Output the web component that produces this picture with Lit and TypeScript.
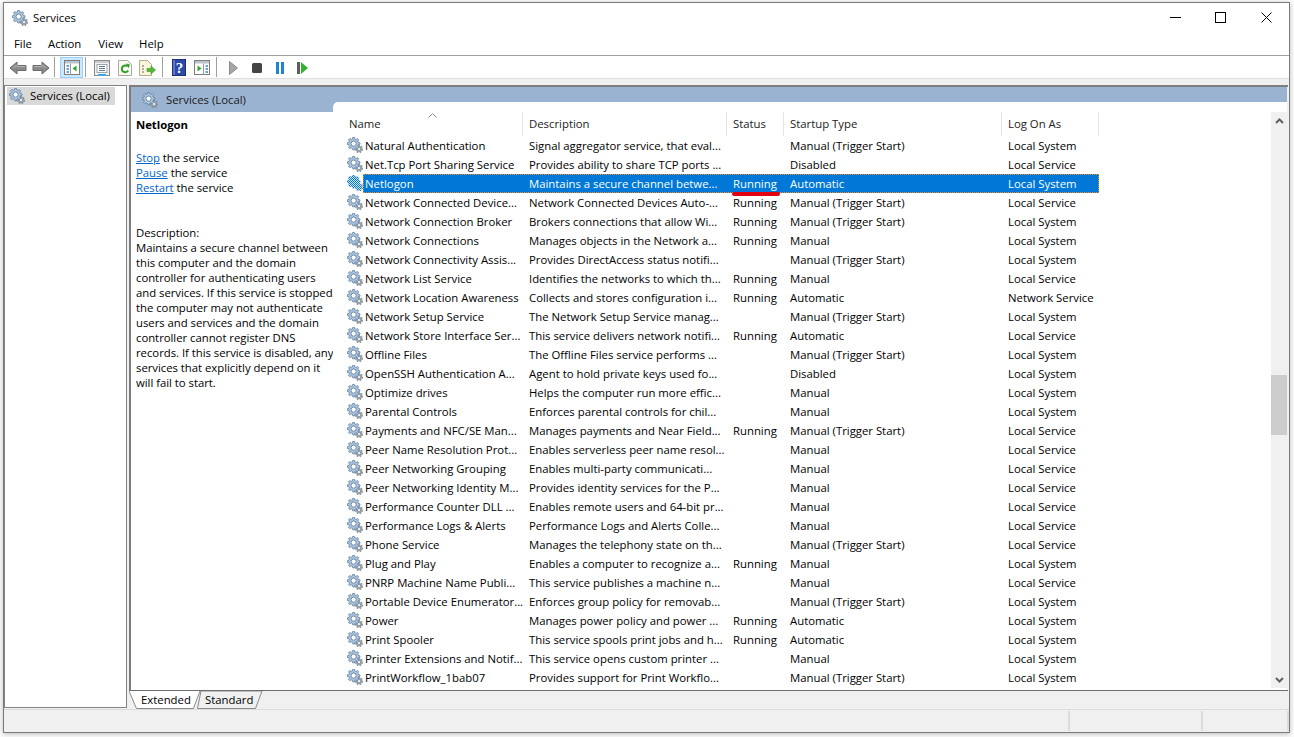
import { LitElement, html, svg, css } from "lit";
import { customElement } from "lit/decorators.js";

type Row = [string, string, string, string, string];
const L = "Local System", S = "Local Service", N = "Network Service";
const MT = "Manual (Trigger Start)", M = "Manual", A = "Automatic", D = "Disabled", R = "Running";
const rows: Row[] = [
  ["Natural Authentication", "Signal aggregator service, that eval...", "", MT, L],
  ["Net.Tcp Port Sharing Service", "Provides ability to share TCP ports ...", "", D, S],
  ["Netlogon", "Maintains a secure channel betwe...", R, A, L],
  ["Network Connected Device...", "Network Connected Devices Auto-...", R, MT, S],
  ["Network Connection Broker", "Brokers connections that allow Wi...", R, MT, L],
  ["Network Connections", "Manages objects in the Network a...", R, M, L],
  ["Network Connectivity Assis...", "Provides DirectAccess status notifi...", "", MT, L],
  ["Network List Service", "Identifies the networks to which th...", R, M, S],
  ["Network Location Awareness", "Collects and stores configuration i...", R, A, N],
  ["Network Setup Service", "The Network Setup Service manag...", "", MT, L],
  ["Network Store Interface Ser...", "This service delivers network notifi...", R, A, S],
  ["Offline Files", "The Offline Files service performs ...", "", MT, L],
  ["OpenSSH Authentication A...", "Agent to hold private keys used fo...", "", D, L],
  ["Optimize drives", "Helps the computer run more effic...", "", M, L],
  ["Parental Controls", "Enforces parental controls for chil...", "", M, L],
  ["Payments and NFC/SE Man...", "Manages payments and Near Field...", R, MT, S],
  ["Peer Name Resolution Prot...", "Enables serverless peer name resol...", "", M, S],
  ["Peer Networking Grouping", "Enables multi-party communicati...", "", M, S],
  ["Peer Networking Identity M...", "Provides identity services for the P...", "", M, S],
  ["Performance Counter DLL ...", "Enables remote users and 64-bit pr...", "", M, S],
  ["Performance Logs & Alerts", "Performance Logs and Alerts Colle...", "", M, S],
  ["Phone Service", "Manages the telephony state on th...", "", MT, S],
  ["Plug and Play", "Enables a computer to recognize a...", R, M, L],
  ["PNRP Machine Name Publi...", "This service publishes a machine n...", "", M, S],
  ["Portable Device Enumerator...", "Enforces group policy for removab...", "", MT, L],
  ["Power", "Manages power policy and power ...", R, A, L],
  ["Print Spooler", "This service spools print jobs and h...", R, A, L],
  ["Printer Extensions and Notif...", "This service opens custom printer ...", "", M, L],
  ["PrintWorkflow_1bab07", "Provides support for Print Workflo...", "", MT, L],
];
const descLines = [
  "Maintains a secure channel between",
  "this computer and the domain",
  "controller for authenticating users",
  "and services. If this service is stopped,",
  "the computer may not authenticate",
  "users and services and the domain",
  "controller cannot register DNS",
  "records. If this service is disabled, any",
  "services that explicitly depend on it",
  "will fail to start.",
];

function gearPath(cx: number, cy: number, ro: number, ri: number, n: number): string {
  const pts: string[] = [];
  const step = (Math.PI * 2) / n;
  for (let i = 0; i < n; i++) {
    const a = i * step - Math.PI / 2;
    const w = step * 0.2;
    const list: [number, number][] = [
      [ri, a - w * 1.5],
      [ro, a - w * 0.8],
      [ro, a + w * 0.8],
      [ri, a + w * 1.5],
    ];
    for (const [r, t] of list) {
      pts.push(`${(cx + r * Math.cos(t)).toFixed(2)} ${(cy + r * Math.sin(t)).toFixed(2)}`);
    }
  }
  return "M" + pts.join("L") + "Z";
}
const BIG = gearPath(6.6, 6.6, 6.4, 4.9, 8);
const SMALL = gearPath(12, 12, 3.9, 2.9, 7);

function gear(selected = false) {
  return html`<svg class="gear" viewBox="0 0 16 16" width="16" height="16">
    ${selected
      ? svg`<defs><pattern id="dither" width="2" height="2" patternUnits="userSpaceOnUse"><rect width="2" height="2" fill="#cfe4f7"></rect><rect width="1" height="1" fill="#0078d7"></rect><rect x="1" y="1" width="1" height="1" fill="#0078d7"></rect></pattern></defs>`
      : ""}
    <path d=${SMALL} fill="#96a0aa" stroke="#747b83" stroke-width=".5"></path>
    <circle cx="12" cy="12" r="1.1" fill="#fff"></circle>
    <path d=${BIG} fill="#adc4dc" stroke="#5f80a2" stroke-width=".8"></path>
    <circle cx="6.6" cy="6.6" r="2.6" fill="#fff" stroke="#5f80a2" stroke-width=".9"></circle>
    ${selected
      ? svg`<path d=${SMALL} fill="url(#dither)" stroke="url(#dither)" stroke-width=".5"></path><path d=${BIG} fill="url(#dither)" stroke="url(#dither)" stroke-width=".8"></path>`
      : ""}
  </svg>`;
}

const icons = {
  back: html`<svg viewBox="0 0 18 16" width="18" height="16"><path d="M1 8 8 2v3.5h9v5H8V14Z" fill="#8b8b8b" stroke="#6a6a6a"></path><path d="M4 8 8 5v1.5h8" fill="none" stroke="#b5b5b5"></path></svg>`,
  fwd: html`<svg viewBox="0 0 18 16" width="18" height="16"><path d="M17 8 10 2v3.5H1v5h9V14Z" fill="#8b8b8b" stroke="#6a6a6a"></path><path d="M14 8 10 5v1.5H2" fill="none" stroke="#b5b5b5"></path></svg>`,
  tree: html`<svg viewBox="0 0 16 15" width="16" height="15"><rect x=".5" y=".5" width="15" height="14" fill="#fff" stroke="#7d7d7d"></rect><rect x="1" y="1" width="14" height="2.5" fill="#b9c4cf"></rect><path d="M6.5 3.5V14.5" stroke="#9a9a9a"></path><path d="M2.5 6h2.5M2.5 9h2.5M2.5 12h2.5" stroke="#3a83c9" stroke-width="1.4"></path><path d="M12.5 5.5v6L8.5 8.500Z" fill="#2ea52e"></path></svg>`,
  props: html`<svg viewBox="0 0 16 16" width="16" height="16"><rect x=".5" y=".5" width="15" height="15" fill="#f2f2f2" stroke="#8a8a8a"></rect><rect x="1" y="1" width="14" height="2" fill="#c7cdd3"></rect><rect x="3" y="4.500" width="10" height="8" fill="#fff" stroke="#9aa5b0"></rect><path d="M5 6.500h6M5 8.500h6M5 10.500h6" stroke="#6c7a88"></path><rect x="4" y="14" width="8" height="2" fill="#3fa6e0"></rect></svg>`,
  refresh: html`<svg viewBox="0 0 14 16" width="14" height="16"><path d="M.5.5h9l4 4v11H.5Z" fill="#fbfbf2" stroke="#a9a9a0"></path><path d="M10.200 10.500A3.400 3.400 0 1 1 9.400 6.200" fill="none" stroke="#2f9e2f" stroke-width="2"></path><path d="M8 3.500l4 1-1.500 3.800Z" fill="#2f9e2f"></path></svg>`,
  exportList: html`<svg viewBox="0 0 17 16" width="17" height="16"><path d="M.5.5h8l4 4v11H.5Z" fill="#f9f5dc" stroke="#b4ad8c"></path><path d="M3 6h2M3 9h2M3 12h2" stroke="#666"></path><path d="M8 8.500h4V6l4.500 4-4.500 4v-2.500H8Z" fill="#55b636" stroke="#3e9426" stroke-width=".6"></path></svg>`,
  help: html`<svg viewBox="0 0 14 17" width="14" height="17"><rect x=".5" y=".5" width="13" height="16" fill="#2c4aa6" stroke="#1e2f78"></rect><rect x="1" y="1" width="2" height="15" fill="#5d78c9"></rect><text class="q" x="7.500" y="13.500">?</text></svg>`,
  action: html`<svg viewBox="0 0 16 15" width="16" height="15"><rect x=".5" y=".5" width="15" height="14" fill="#fff" stroke="#7d7d7d"></rect><rect x="1" y="1" width="14" height="2.500" fill="#b9c4cf"></rect><path d="M9.500 3.500V14.500" stroke="#9a9a9a"></path><path d="M11.500 6h2.500M11.500 9h2.500M11.500 12h2.500" stroke="#3a83c9" stroke-width="1.400"></path><path d="M3.500 5.500v6L7.500 8.500Z" fill="#2ea52e"></path></svg>`,
  play: html`<svg viewBox="0 0 9 14" width="9" height="14"><path d="M.5.500 8.500 7 .5 13.500Z" fill="#a6a6a6" stroke="#8c8c8c"></path></svg>`,
  stop: html`<svg viewBox="0 0 10 10" width="10" height="10"><rect width="10" height="10" rx="1.500" fill="#444"></rect></svg>`,
  pause: html`<svg viewBox="0 0 8 12" width="8" height="12"><rect width="3" height="12" fill="#1f82d2"></rect><rect x="5" width="3" height="12" fill="#1f82d2"></rect></svg>`,
  resume: html`<svg viewBox="0 0 11 12" width="11" height="12"><rect width="3" height="12" fill="#5d5d5d"></rect><path d="M4 0 11 6 4 12Z" fill="#35b035"></path></svg>`,
};

@customElement("app-root")
export class AppRoot extends LitElement {
  static styles = css`
    :host {
      display: block;
      width: 1294px;
      height: 737px;
      box-sizing: border-box;
      padding: 2px 4px 4px 3px;
      background: #fbfbfb;
      font-family: "Open Sans", "Noto Sans", sans-serif;
      font-size: 11.35px;
      color: #000;
    }
    .win {
      height: 100%;
      box-sizing: border-box;
      border: 1px solid #7a7a7a;
      background: #f0f0f0;
      display: flex;
      flex-direction: column;
      box-shadow: 0 1px 5px rgba(0, 0, 0, 0.25);
    }
    .title {
      height: 31px;
      flex: none;
      box-sizing: border-box;
      background: #fff;
      display: flex;
      align-items: center;
      padding: 0 0 2px 8px;
    }
    .title .gear { margin-right: 5px; }
    .ctl { margin-left: auto; display: flex; }
    .ctl div { width: 45.500px; height: 29px; display: flex; align-items: center; justify-content: center; }
    .menu {
      height: 21px;
      flex: none;
      box-sizing: content-box;
      background: #fff;
      border-bottom: 1px solid #a0a0a0;
      display: flex;
      align-items: center;
      padding-left: 3px;
    }
    .menu span { padding: 0 7px 2px 7px; margin-right: 2px; }
    .menu span:nth-child(2) { margin-right: 3px; }
    .tool {
      height: 22px;
      flex: none;
      box-sizing: content-box;
      background: #fff;
      border-bottom: 1px solid #e0e0e0;
      display: flex;
      align-items: center;
      padding-left: 2px;
    }
    .b { width: 23px; height: 21px; box-sizing: border-box; display: flex; align-items: center; justify-content: center; flex: none; padding-top: 1px; }
    .b.on { background: #cce8ff; border: 1px solid #99d1ff; padding-top: 0; }
    .sep { width: 1px; height: 20px; background: #a0a0a0; flex: none; margin: 0 4px 0 2px; }
    .sep.s1 { margin: 0 5px 0 2px; }
    .sep.s2 { margin: 0 4px 0 3px; }
    .sep.s3 { margin: 0 5px 0 3px; }
    .q { font: bold 15px "Liberation Serif", serif; fill: #fff; text-anchor: middle; }
    .content {
      flex: 1;
      min-height: 0;
      display: flex;
      margin-top: 6px;
    }
    .tree {
      width: 123px;
      box-sizing: border-box;
      flex: none;
      background: #fff;
      border: 1px solid #828282;
      padding: 1px 0 0 2px;
      margin-bottom: 1px;
    }
    .node {
      width: 108px;
      height: 18px;
      background: #d9d9d9;
      display: flex;
      align-items: center;
      padding: 0 0 1px 2px;
      box-sizing: border-box;
    }
    .node .gear { margin-right: 5px; flex: none; }
    .right {
      flex: 1;
      min-width: 0;
      margin: 0 1px 0 2px;
      display: flex;
      flex-direction: column;
    }
    .frame {
      height: 605px;
      box-sizing: border-box;
      flex: none;
      display: flex;
      border-top: 2px solid #7d7d7d;
      border-left: 2px solid #7d7d7d;
      padding-right: 1px;
    }
    .info { width: 202px; flex: none; background: #fff; }
    .head {
      height: 25px;
      box-sizing: border-box;
      background: #9ab3d1;
      display: flex;
      align-items: center;
      padding: 0 0 0 11px;
      color: #1a1a1a;
    }
    .head .gear { margin-right: 8px; }
    .body { padding: 5px 0 0 5px; line-height: 15px; white-space: nowrap; letter-spacing: -0.03px; }
    .body b { display: block; font-weight: 700; }
    .acts { margin-top: 18px; }
    .acts a { color: #0066cc; text-decoration: underline; }
    .dsc { margin-top: 30px; }
    .main { flex: 1; min-width: 0; background: #9ab3d1; display: flex; }
    .sheet {
      flex: 1;
      min-width: 0;
      margin-top: 15px;
      background: #fff;
      border-top-left-radius: 5px;
      padding-top: 10px;
      display: flex;
    }
    .list { flex: 1; min-width: 0; padding-left: 11px; position: relative; }
    .hdr {
      display: grid;
      grid-template-columns: 179px 204px 57px 218px 97px;
      height: 24px;
      width: 755px;
      position: relative;
    }
    .hdr span {
      border-right: 1px solid #e5e5e5;
      padding-left: 6px;
      line-height: 24px;
      color: #222;
    }
    .hdr span:first-of-type { padding-left: 5px; }
    .sort { position: absolute; left: 84px; top: 1px; }
    .row { display: flex; height: 19px; }
    .ico { width: 19px; flex: none; box-sizing: border-box; padding: 1px 0 0 3px; }
    .cells {
      width: 736px;
      box-sizing: border-box;
      border: 1px dotted transparent;
      display: grid;
      grid-template-columns: 159px 204px 57px 218px 96px;
      line-height: 17px;
    }
    .cells span { padding-left: 6px; white-space: nowrap; overflow: hidden; }
    .cells span:first-child { padding-left: 1px; }
    .cells span.st { position: relative; overflow: visible; }
    .row.sel .cells { background: #0078d7; color: #fff; border-color: #f08c28; }
    .mark {
      position: absolute;
      left: 5px;
      top: 17px;
      width: 48px;
      height: 4px;
      border-radius: 2px;
      background: #e3000f;
    }
    .bar {
      width: 16px;
      flex: none;
      margin-bottom: 2px;
      background: #f0f0f0;
      display: flex;
      flex-direction: column;
      align-items: center;
      justify-content: space-between;
      position: relative;
    }
    .arr { height: 17px; display: flex; align-items: center; }
    .thumb { position: absolute; left: 0; right: 0; top: 263px; height: 60px; background: #cdcdcd; }
    .tabs {
      flex: 1;
      display: grid;
      border-top: 1px solid #6e6e6e;
      margin-left: 0;
    }
    .tabs > * { grid-area: 1 / 1; }
    .tabtext { display: flex; padding: 0 0 0 12px; line-height: 18px; }
    .tabtext span:first-child { width: 64px; }
    .status {
      height: 23px;
      box-sizing: border-box;
      flex: none;
      border-top: 1px solid #dcdcdc;
      display: flex;
      justify-content: flex-end;
    }
    .status div { border-left: 2px solid #dcdcdc; margin-top: 1px; margin-bottom: 1px; box-sizing: border-box; }
    .status .a { width: 133px; }
    .status .c { width: 86px; }
    .status .d { width: 2px; }
  `;

  render() {
    return html`<div class="win">
      <div class="title">
        ${gear()}<span>Services</span>
        <div class="ctl">
          <div><svg width="11" height="11" viewBox="0 0 11 11"><path d="M0 5.500H11" stroke="#000"></path></svg></div>
          <div><svg width="11" height="11" viewBox="0 0 11 11"><rect x=".5" y=".5" width="10" height="10" fill="none" stroke="#000"></rect></svg></div>
          <div><svg width="11" height="11" viewBox="0 0 11 11"><path d="M.5.5l10 10M10.500.5l-10 10" stroke="#000"></path></svg></div>
        </div>
      </div>
      <div class="menu"><span>File</span><span>Action</span><span>View</span><span>Help</span></div>
      <div class="tool">
        <span class="b">${icons.back}</span><span class="b">${icons.fwd}</span>
        <span class="sep s1"></span>
        <span class="b on">${icons.tree}</span>
        <span class="sep"></span>
        <span class="b">${icons.props}</span><span class="b">${icons.refresh}</span><span class="b">${icons.exportList}</span>
        <span class="sep s2"></span>
        <span class="b">${icons.help}</span><span class="b">${icons.action}</span>
        <span class="sep s3"></span>
        <span class="b">${icons.play}</span><span class="b">${icons.stop}</span><span class="b">${icons.pause}</span><span class="b">${icons.resume}</span>
      </div>
      <div class="content">
        <div class="tree"><div class="node">${gear()}<span>Services (Local)</span></div></div>
        <div class="right">
          <div class="frame">
            <div class="info">
              <div class="head">${gear()}<span>Services (Local)</span></div>
              <div class="body">
                <b>Netlogon</b>
                <div class="acts">
                  <div><a>Stop</a> the service</div>
                  <div><a>Pause</a> the service</div>
                  <div><a>Restart</a> the service</div>
                </div>
                <div class="dsc">
                  <div>Description:</div>
                  ${descLines.map((l) => html`<div>${l}</div>`)}
                </div>
              </div>
            </div>
            <div class="main">
              <div class="sheet">
                <div class="list">
                  <div class="hdr">
                    <svg class="sort" width="9" height="5" viewBox="0 0 9 5"><path d="M.5 4.500l4-4 4 4" fill="none" stroke="#8a8a8a"></path></svg>
                    <span>Name</span><span>Description</span><span>Status</span><span>Startup Type</span><span>Log On As</span>
                  </div>
                  ${rows.map((r) => {
                    const sel = r[0] === "Netlogon";
                    return html`<div class="row ${sel ? "sel" : ""}">
                      <div class="ico">${gear(sel)}</div>
                      <div class="cells">
                        <span>${r[0]}</span><span>${r[1]}</span>
                        <span class="st">${r[2]}${sel ? html`<i class="mark"></i>` : ""}</span>
                        <span>${r[3]}</span><span>${r[4]}</span>
                      </div>
                    </div>`;
                  })}
                </div>
                <div class="bar">
                  <div class="arr"><svg width="9" height="6" viewBox="0 0 9 6"><path d="M1 5l3.500-3.500L8 5" fill="none" stroke="#606060" stroke-width="2"></path></svg></div>
                  <div class="thumb"></div>
                  <div class="arr"><svg width="9" height="6" viewBox="0 0 9 6"><path d="M1 1l3.500 3.500L8 1" fill="none" stroke="#606060" stroke-width="2"></path></svg></div>
                </div>
              </div>
            </div>
          </div>
          <div class="tabs">
            <svg width="140" height="18" viewBox="0 0 140 18">
              <path d="M68.500 17.500H126.500L133 0H72Z" fill="#f0f0f0" stroke="#8a8a8a"></path>
              <path d="M0 0 7.500 17.500H64.500L71 0Z" fill="#fff"></path>
              <path d="M0 0 7.500 17.500H64.500L71 0" fill="none" stroke="#8a8a8a"></path>
            </svg>
            <div class="tabtext"><span>Extended</span><span>Standard</span></div>
          </div>
        </div>
      </div>
      <div class="status"><div class="a"></div><div class="c"></div><div class="d"></div></div>
    </div>`;
  }
}
